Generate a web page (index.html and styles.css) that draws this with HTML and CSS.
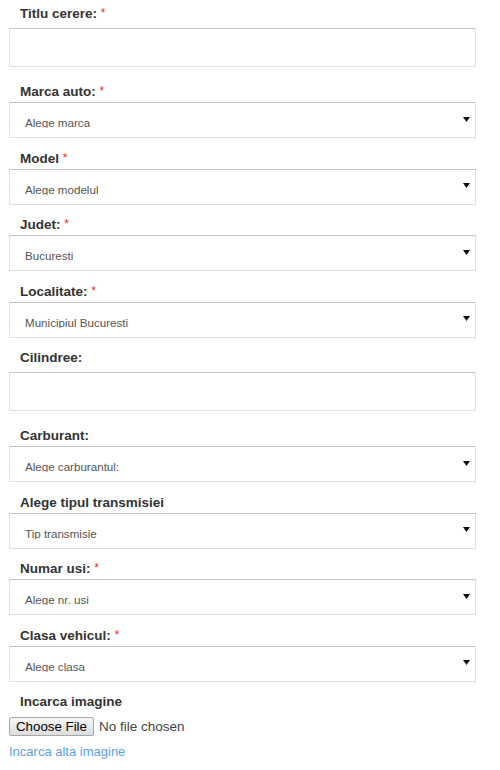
FILE: index.html
```html
<!DOCTYPE html>
<html lang="ro">
<head>
<meta charset="utf-8">
<title>Cerere</title>
<link rel="stylesheet" href="styles.css">
</head>
<body>
<form class="form">
  <div class="group group-text">
    <label class="label">Titlu cerere: <span class="req">*</span></label>
    <input class="input" type="text">
  </div>
  <div class="group">
    <label class="label">Marca auto: <span class="req">*</span></label>
    <div class="select"><span class="select-value">Alege marca</span><svg class="arrow" width="7" height="5" viewBox="0 0 7 5"><polygon points="0,0 7,0 3.5,5" fill="#111"/></svg></div>
  </div>
  <div class="group">
    <label class="label">Model <span class="req">*</span></label>
    <div class="select"><span class="select-value">Alege modelul</span><svg class="arrow" width="7" height="5" viewBox="0 0 7 5"><polygon points="0,0 7,0 3.5,5" fill="#111"/></svg></div>
  </div>
  <div class="group">
    <label class="label">Judet: <span class="req">*</span></label>
    <div class="select"><span class="select-value">Bucuresti</span><svg class="arrow" width="7" height="5" viewBox="0 0 7 5"><polygon points="0,0 7,0 3.5,5" fill="#111"/></svg></div>
  </div>
  <div class="group">
    <label class="label">Localitate: <span class="req">*</span></label>
    <div class="select"><span class="select-value">Municipiul Bucuresti</span><svg class="arrow" width="7" height="5" viewBox="0 0 7 5"><polygon points="0,0 7,0 3.5,5" fill="#111"/></svg></div>
  </div>
  <div class="group group-text">
    <label class="label">Cilindree:</label>
    <input class="input" type="text">
  </div>
  <div class="group">
    <label class="label">Carburant:</label>
    <div class="select"><span class="select-value">Alege carburantul:</span><svg class="arrow" width="7" height="5" viewBox="0 0 7 5"><polygon points="0,0 7,0 3.5,5" fill="#111"/></svg></div>
  </div>
  <div class="group">
    <label class="label">Alege tipul transmisiei</label>
    <div class="select"><span class="select-value">Tip transmisie</span><svg class="arrow" width="7" height="5" viewBox="0 0 7 5"><polygon points="0,0 7,0 3.5,5" fill="#111"/></svg></div>
  </div>
  <div class="group">
    <label class="label">Numar usi: <span class="req">*</span></label>
    <div class="select"><span class="select-value">Alege nr. usi</span><svg class="arrow" width="7" height="5" viewBox="0 0 7 5"><polygon points="0,0 7,0 3.5,5" fill="#111"/></svg></div>
  </div>
  <div class="group">
    <label class="label">Clasa vehicul: <span class="req">*</span></label>
    <div class="select"><span class="select-value">Alege clasa</span><svg class="arrow" width="7" height="5" viewBox="0 0 7 5"><polygon points="0,0 7,0 3.5,5" fill="#111"/></svg></div>
  </div>
  <div class="group group-file">
    <label class="label">Incarca imagine</label>
    <input class="file" type="file">
  </div>
  <a class="link" href="#">Incarca alta imagine</a>
</form>
</body>
</html>
```

FILE: styles.css
```css
html, body {
  margin: 0;
  padding: 0;
  background: #ffffff;
}

body {
  font-family: "Liberation Sans", Arial, sans-serif;
  color: #333333;
}

.form {
  width: 467px;
  padding: 4px 0 0 9px;
  display: flex;
  flex-direction: column;
}

.group {
  display: flex;
  flex-direction: column;
  margin-bottom: 10.5px;
}

.group-text {
  margin-bottom: 15px;
}

.label {
  display: block;
  height: 20px;
  padding-left: 11px;
  font-size: 13.5px;
  font-weight: bold;
  line-height: 20px;
  color: #333333;
}

.req {
  color: #e52b2b;
  font-weight: normal;
  font-size: 12px;
  line-height: 1;
  vertical-align: 1px;
}

.input {
  box-sizing: border-box;
  margin: 4px 0 0 0;
  width: 467px;
  height: 39px;
  border: 1px solid #e0e0e0;
  border-top-color: #c4c4c4;
  background: #ffffff;
  padding: 0 12px;
  outline: none;
}

.select {
  box-sizing: border-box;
  width: 467px;
  height: 36px;
  border: 1px solid #e0e0e0;
  border-top-color: #c4c4c4;
  background: #ffffff;
  display: flex;
  justify-content: space-between;
  align-items: flex-start;
}

.select-value {
  display: block;
  margin-top: 12px;
  padding-left: 15px;
  height: 13px;
  line-height: 16px;
  overflow: hidden;
  font-size: 11.6px;
  color: #555555;
}

.arrow {
  display: block;
  align-self: center;
  margin-right: 5px;
  margin-top: -2px;
}

.group-file {
  margin-bottom: 0;
}

.file {
  margin-top: 5px;
  font-family: "Liberation Sans", Arial, sans-serif;
  font-size: 13.5px;
  color: #444444;
}

.file::file-selector-button {
  font-family: "Liberation Sans", Arial, sans-serif;
  font-size: 13.3px;
  color: #000000;
  padding: 1px 6px;
  margin: 0 5px 0 0;
  border: 1px solid #a6a6a6;
  border-radius: 2px;
  background: linear-gradient(#f7f7f7, #dddddd);
}

.link {
  display: block;
  margin-top: 7px;
  font-size: 13px;
  line-height: 18px;
  color: #5d9fe8;
  text-decoration: none;
  align-self: flex-start;
}
```
